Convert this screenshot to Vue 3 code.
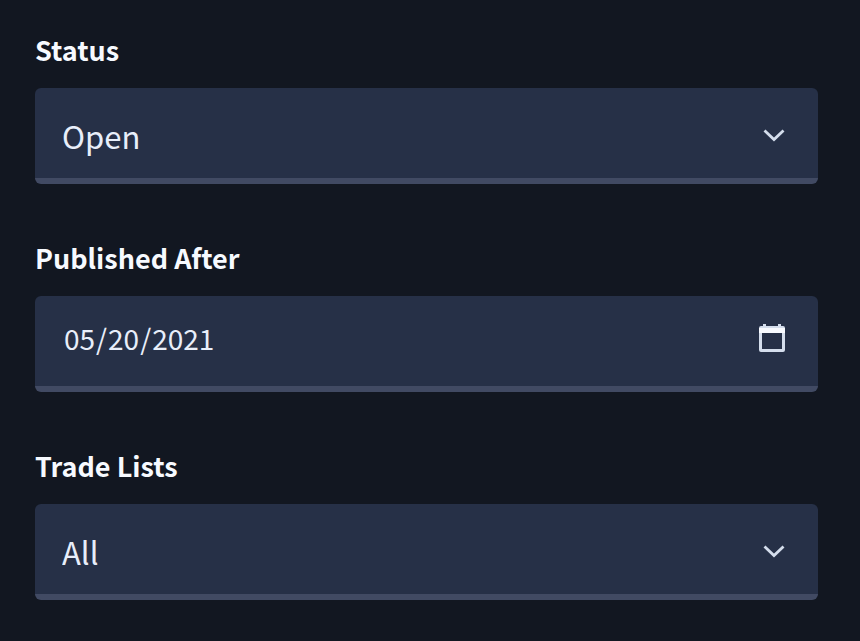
<template>
  <form class="filters" @submit.prevent>
    <div v-for="field in fields" :key="field.id" class="field">
      <label :for="field.id" class="field-label">{{ field.label }}</label>

      <div class="control">
        <select
          v-if="field.type === 'select'"
          :id="field.id"
          v-model="values[field.id]"
          class="input input-select"
        >
          <option v-for="option in field.options" :key="option" :value="option">
            {{ option }}
          </option>
        </select>
        <input
          v-else
          :id="field.id"
          v-model="values[field.id]"
          type="date"
          class="input input-date"
        />

        <svg v-if="field.type === 'select'" class="icon" viewBox="0 0 28 28" aria-hidden="true">
          <path d="M4.500 8.500 L14 17.5 L23.500 8.500" fill="none" stroke="currentColor" stroke-width="2.8" />
        </svg>
        <svg v-else class="icon icon-date" viewBox="0 0 28 28" aria-hidden="true">
          <path
            d="M3 2h2V0h3v2h12V0h3v2h2a2 2 0 0 1 2 2v22a2 2 0 0 1-2 2H3a2 2 0 0 1-2-2V4a2 2 0 0 1 2-2zM4 9v16h20V9z"
            fill="currentColor"
            fill-rule="evenodd"
          />
          <path d="M1 4h26v5H1z" fill="#f8faff" />
        </svg>
      </div>
    </div>
  </form>
</template>

<script setup>
import { reactive } from 'vue';

const fields = [
  { id: 'status', label: 'Status', type: 'select', options: ['Open', 'Closed', 'All'] },
  { id: 'publishedAfter', label: 'Published After', type: 'date' },
  { id: 'tradeLists', label: 'Trade Lists', type: 'select', options: ['All'] }
];

const values = reactive({
  status: 'Open',
  publishedAfter: '2021-05-20',
  tradeLists: 'All'
});
</script>

<style>
body {
  background: #121721;
}
</style>

<style scoped>
.filters {
  display: flex;
  flex-direction: column;
  gap: 54px;
  padding: 30px 42px 40px 35px;
  font-family: "Noto Sans CJK SC", "Noto Sans", sans-serif;
}

.field {
  display: flex;
  flex-direction: column;
  gap: 18px;
}

.field-label {
  color: #f7faff;
  font-size: 27px;
  font-weight: 700;
  line-height: 40px;
}

.control {
  position: relative;
}

.input {
  display: block;
  box-sizing: border-box;
  width: 100%;
  height: 96px;
  margin: 0;
  padding: 0 28px 0 27px;
  border: 0;
  border-bottom: 6px solid #414a63;
  border-radius: 6px;
  outline: none;
  appearance: none;
  background: #263047;
  color: #e8eefa;
  font-family: inherit;
  font-size: 31px;
}

.input:focus-visible {
  border-bottom-color: #6b7ba3;
}

.input-select {
  padding-top: 4px;
}

.input-date {
  padding-bottom: 6px;
  padding-left: 28px;
  font-size: 28px;
}

.input-date::-webkit-calendar-picker-indicator {
  opacity: 0;
}

.icon {
  position: absolute;
  top: 34px;
  right: 30px;
  width: 28px;
  height: 28px;
  color: #d4ddec;
  pointer-events: none;
}

.icon-date {
  top: 28px;
  right: 32px;
}
</style>
